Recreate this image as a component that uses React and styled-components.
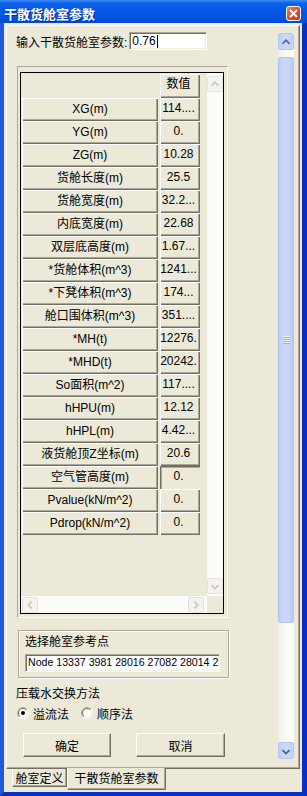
import React from 'react';
import styled, { createGlobalStyle, css } from 'styled-components';

const GlobalStyle = createGlobalStyle`
  html, body {
    margin: 0;
    padding: 0;
    background: #ECE9D8;
  }
  body {
    font-family: "Liberation Sans", "Noto Sans CJK SC", sans-serif;
    font-size: 12px;
    color: #000;
  }
  * {
    box-sizing: border-box;
  }
`;

const rows = [
  ['XG(m)', '114....'],
  ['YG(m)', '0.'],
  ['ZG(m)', '10.28'],
  ['货舱长度(m)', '25.5'],
  ['货舱宽度(m)', '32.2...'],
  ['内底宽度(m)', '22.68'],
  ['双层底高度(m)', '1.67...'],
  ['*货舱体积(m^3)', '1241...'],
  ['*下凳体积(m^3)', '174...'],
  ['舱口围体积(m^3)', '351....'],
  ['*MH(t)', '12276.'],
  ['*MHD(t)', '20242.'],
  ['So面积(m^2)', '117....'],
  ['hHPU(m)', '12.12'],
  ['hHPL(m)', '4.42...'],
  ['液货舱顶Z坐标(m)', '20.6'],
  ['空气管高度(m)', '0.', true],
  ['Pvalue(kN/m^2)', '0.'],
  ['Pdrop(kN/m^2)', '0.'],
];

const raised = css`
  background: #ECE9D8;
  box-shadow: inset 1px 1px #fff, inset -1px -1px #716F64, inset -2px -2px #ACA899;
`;

const sunken = css`
  border: 1px solid;
  border-color: #ACA899 #fff #fff #ACA899;
  box-shadow: inset 1px 1px #716F64, inset -1px -1px #F1EFE2;
`;

const Chevron = ({ dir, color }) => {
  const pts = {
    up: '4,10 8,6 12,10',
    down: '4,7 8,11 12,7',
    left: '10,4 6,8 10,12',
    right: '6,4 10,8 6,12',
  }[dir];
  return (
    <svg width="16" height="16" viewBox="0 0 16 16">
      <polyline points={pts} fill="none" stroke={color} strokeWidth="2" />
    </svg>
  );
};

const Radio = ({ id, checked }) => (
  <svg width="12" height="12" viewBox="0 0 12 12">
    <defs>
      <linearGradient id={`o${id}`} x1="0" y1="0" x2="1" y2="1">
        <stop offset="0.5" stopColor="#ACA899" />
        <stop offset="0.5" stopColor="#fff" />
      </linearGradient>
      <linearGradient id={`i${id}`} x1="0" y1="0" x2="1" y2="1">
        <stop offset="0.5" stopColor="#716F64" />
        <stop offset="0.5" stopColor="#F1EFE2" />
      </linearGradient>
    </defs>
    <circle cx="6" cy="6" r="5.5" fill="none" stroke={`url(#o${id})`} />
    <circle cx="6" cy="6" r="4.5" fill="#fff" stroke={`url(#i${id})`} />
    {checked && <circle cx="6" cy="6" r="2" fill="#000" />}
  </svg>
);

export default function App() {
  return (
    <>
      <GlobalStyle />
      <Window>
        <TitleBar>
          <span>干散货舱室参数</span>
          <CloseButton>
            <svg width="9" height="9" viewBox="0 0 9 9">
              <path d="M1 1L8 8M8 1L1 8" stroke="#fff" strokeWidth="2" />
            </svg>
          </CloseButton>
        </TitleBar>
        <Frame>
          <Panel>
            <Content>
              <TopRow>
                <span>输入干散货舱室参数:</span>
                <EditBox>
                  0.76
                  <Caret />
                </EditBox>
              </TopRow>

              <GridFrame>
                <GridBox>
                  <Cells>
                    <Row $height={24}>
                      <span />
                      <ValueCell>数值</ValueCell>
                    </Row>
                    {rows.map(([label, value, current]) => (
                      <Row key={label} $height={23}>
                        <LabelCell>{label}</LabelCell>
                        <ValueCell $current={current}>{value}</ValueCell>
                      </Row>
                    ))}
                  </Cells>
                  <PaleVScroll>
                    <PaleArrow>
                      <Chevron dir="up" color="#CBC8BB" />
                    </PaleArrow>
                    <PaleArrow>
                      <Chevron dir="down" color="#CBC8BB" />
                    </PaleArrow>
                  </PaleVScroll>
                  <PaleHScroll>
                    <PaleArrow>
                      <Chevron dir="left" color="#CBC8BB" />
                    </PaleArrow>
                    <PaleArrow>
                      <Chevron dir="right" color="#CBC8BB" />
                    </PaleArrow>
                  </PaleHScroll>
                </GridBox>
              </GridFrame>

              <GroupBox>
                <span>选择舱室参考点</span>
                <NodeEdit>Node 13337 3981 28016 27082 28014 2</NodeEdit>
              </GroupBox>

              <SectionLabel>压载水交换方法</SectionLabel>
              <RadioRow>
                <RadioItem>
                  <Radio id="r1" checked />
                  <span>溢流法</span>
                </RadioItem>
                <RadioItem>
                  <Radio id="r2" />
                  <span>顺序法</span>
                </RadioItem>
              </RadioRow>

              <ButtonRow>
                <PushButton $width={88}>确定</PushButton>
                <PushButton $width={89}>取消</PushButton>
              </ButtonRow>
            </Content>

            <ScrollBar>
              <ScrollArrow>
                <Chevron dir="up" color="#4D6185" />
              </ScrollArrow>
              <Track $height={7} />
              <Thumb>
                <Grip>
                  <i />
                  <i />
                  <i />
                  <i />
                </Grip>
              </Thumb>
              <Track $grow />
              <ScrollArrow>
                <Chevron dir="down" color="#4D6185" />
              </ScrollArrow>
            </ScrollBar>
          </Panel>

          <TabRow>
            <Tab $width={55}>舱室定义</Tab>
            <Tab $width={99} $active>
              干散货舱室参数
            </Tab>
          </TabRow>
        </Frame>
      </Window>
    </>
  );
}

const Window = styled.div`
  width: 307px;
  height: 796px;
  display: flex;
  flex-direction: column;
  overflow: hidden;
`;

const TitleBar = styled.div`
  height: 23px;
  flex: none;
  display: flex;
  align-items: center;
  justify-content: space-between;
  padding: 4px 6px 0 4px;
  background: linear-gradient(
    180deg,
    #3D8DF6 0%,
    #0C62E8 14%,
    #0559E4 45%,
    #0353DF 80%,
    #0248D2 100%
  );
  color: #fff;
  font-weight: bold;
  font-size: 13px;
  text-shadow: 1px 1px #0A2C8C;
`;

const CloseButton = styled.div`
  width: 15px;
  height: 15px;
  border: 1px solid #fff;
  border-radius: 3px;
  background: linear-gradient(135deg, #E98665 0%, #DB5231 45%, #C2381A 100%);
  display: flex;
  align-items: center;
  justify-content: center;
`;

const Frame = styled.div`
  flex: 1;
  display: flex;
  flex-direction: column;
  background: #ECE9D8;
  border-left: 4px solid #2159DE;
  border-right: 5px solid #0A2EC2;
  border-bottom: 4px solid #0A2FC5;
  padding: 2px 2px 0 2px;
`;

const Panel = styled.div`
  flex: 1;
  display: flex;
  border-top: 1px solid #fff;
  border-left: 1px solid #fff;
  border-right: 1px solid #716F64;
  border-bottom: 1px solid #716F64;
  box-shadow: inset -1px -1px #ACA899;
  min-height: 0;
`;

const Content = styled.div`
  flex: 1;
  display: flex;
  flex-direction: column;
  align-items: flex-start;
  padding: 6px 0 0 9px;
  overflow: hidden;
`;

const TopRow = styled.div`
  height: 18px;
  display: flex;
  align-items: center;
  gap: 2px;
`;

const EditBox = styled.div`
  ${sunken};
  width: 78px;
  height: 18px;
  background: #fff;
  padding: 0 2px;
  display: flex;
  align-items: center;
  line-height: 14px;
`;

const Caret = styled.span`
  width: 1px;
  height: 13px;
  background: #000;
  margin-left: 1px;
`;

const GridFrame = styled.div`
  margin: 16px 0 0 1px;
  width: 211px;
  height: 552px;
  border: 1px solid;
  border-color: #ACA899 #fff #fff #ACA899;
  padding: 5px 3px 3px 2px;
`;

const GridBox = styled.div`
  width: 204px;
  height: 542px;
  border: 1px solid #000;
  display: grid;
  grid-template-columns: 186px 16px;
  grid-template-rows: 523px 17px;
  background: #ECE9D8;
`;

const Cells = styled.div`
  padding: 1px 0 0 1px;
  overflow: hidden;
`;

const Row = styled.div`
  height: ${(p) => p.$height}px;
  display: grid;
  grid-template-columns: 136px 40px;
  column-gap: 2px;
`;

const LabelCell = styled.div`
  ${raised};
  text-align: center;
  line-height: 22px;
  white-space: nowrap;
  overflow: hidden;
`;

const ValueCell = styled.div`
  ${raised};
  text-align: center;
  padding-right: 3px;
  line-height: 21px;
  white-space: nowrap;
  overflow: hidden;
  ${(p) =>
    p.$current &&
    css`
      box-shadow: inset 1px 1px #716F64, inset 2px 2px #ACA899, inset -1px -1px #ECE9D8;
    `}
`;

const PaleVScroll = styled.div`
  background: #FCFCFA;
  display: flex;
  flex-direction: column;
  justify-content: space-between;
  padding: 3px 0 2px;
`;

const PaleHScroll = styled.div`
  background: #FCFCFA;
  display: flex;
  justify-content: space-between;
  padding: 1px 3px 0 1px;
`;

const PaleArrow = styled.div`
  width: 16px;
  height: 16px;
  border: 1px solid #E6E5DD;
  border-radius: 2px;
  background: #F4F3EE;
  display: flex;
  align-items: center;
  justify-content: center;
  overflow: hidden;
`;

const GroupBox = styled.div`
  margin: 12px 0 0 2px;
  width: 211px;
  height: 48px;
  border: 1px solid #ACA899;
  box-shadow: inset 1px 1px #fff, 1px 1px #fff;
  padding: 4px 0 0 6px;
  display: flex;
  flex-direction: column;
  gap: 5px;
  line-height: 14px;
`;

const NodeEdit = styled.div`
  ${sunken};
  width: 195px;
  height: 18px;
  background: #fff;
  padding: 0 1px 0 2px;
  font-size: 10.6px;
  line-height: 15px;
  white-space: nowrap;
  overflow: hidden;
`;

const SectionLabel = styled.div`
  margin-top: 8px;
  line-height: 16px;
`;

const RadioRow = styled.div`
  margin: 3px 0 0 1px;
  height: 16px;
  display: flex;
  align-items: center;
  gap: 12px;
`;

const RadioItem = styled.label`
  display: flex;
  align-items: center;
  gap: 4px;
`;

const ButtonRow = styled.div`
  margin: 12px 0 0 7px;
  display: flex;
  gap: 25px;
`;

const PushButton = styled.div`
  width: ${(p) => p.$width}px;
  height: 24px;
  border: 1px solid;
  border-color: #fff #716F64 #716F64 #fff;
  box-shadow: inset -1px -1px #ACA899;
  background: #ECE9D8;
  display: flex;
  align-items: center;
  justify-content: center;
`;

const ScrollBar = styled.div`
  width: 16px;
  flex: none;
  margin: 7px 5px 9px 0;
  display: flex;
  flex-direction: column;
  background: linear-gradient(90deg, #F1EFE7 0%, #FBFBF8 60%, #FEFEFD 100%);
`;

const ScrollArrow = styled.div`
  height: 17px;
  flex: none;
  border: 1px solid #B4C7F2;
  border-radius: 2px;
  background: linear-gradient(90deg, #BCCFFA 0%, #CBD9FD 40%, #C3D3FB 100%);
  display: flex;
  align-items: center;
  justify-content: center;
`;

const Track = styled.div`
  flex: ${(p) => (p.$grow ? 1 : 'none')};
  height: ${(p) => (p.$height ? `${p.$height}px` : 'auto')};
`;

const Thumb = styled.div`
  height: 566px;
  flex: none;
  border: 1px solid #B0C4EF;
  border-radius: 2px;
  background: linear-gradient(90deg, #BACDF8 0%, #CAD8FD 30%, #C6D5FC 75%, #B8CBF5 100%);
  display: flex;
  align-items: center;
  justify-content: center;
`;

const Grip = styled.div`
  display: flex;
  flex-direction: column;

  & i {
    display: block;
    width: 7px;
    height: 2px;
    border-top: 1px solid #EEF4FE;
    border-bottom: 1px solid #8CAEF0;
  }
`;

const TabRow = styled.div`
  height: 23px;
  flex: none;
  display: flex;
  align-items: flex-start;
  padding-left: 6px;
`;

const Tab = styled.div`
  width: ${(p) => p.$width}px;
  height: ${(p) => (p.$active ? 22 : 18)}px;
  margin-top: ${(p) => (p.$active ? -1 : 0)}px;
  position: relative;
  z-index: 1;
  background: #ECE9D8;
  border-left: 1px solid #fff;
  border-right: 1px solid #716F64;
  border-bottom: 1px solid #716F64;
  box-shadow: inset -1px -1px #ACA899;
  display: flex;
  align-items: center;
  justify-content: center;
  padding-bottom: ${(p) => (p.$active ? 2 : 1)}px;
`;
